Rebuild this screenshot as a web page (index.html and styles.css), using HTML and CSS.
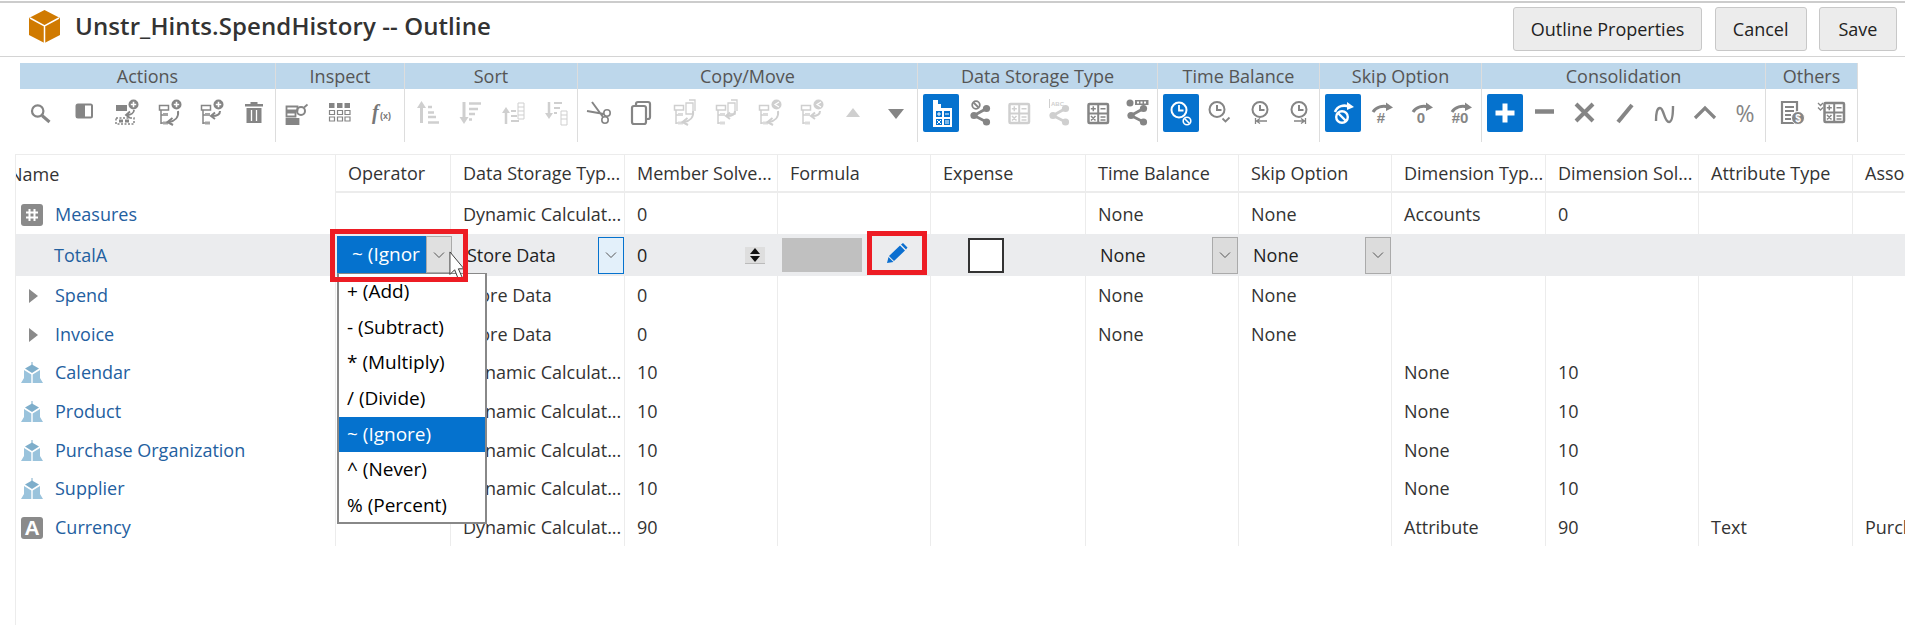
FILE: index.html
```html
<!DOCTYPE html>
<html>
<head>
    <title>Unstr_Hints.SpendHistory -- Outline</title>
    <link rel="stylesheet" href="styles.css">
</head>
<body>
    <!-- shared icon parts -->
    <svg class="sprite" aria-hidden="true">
        <symbol id="tree" viewBox="0 0 32 32">
            <path d="M6.5 8.500h9v4.500h-9zM8 13v14M8 18h2M8 26h2" fill="none" stroke="currentColor" stroke-width="1.500"/>
            <path d="M10 16h5v3h-5zM10 24.500h5v3h-5z" fill="currentColor" opacity=".75"/>
        </symbol>
        <symbol id="plus-dot" viewBox="0 0 32 32">
            <circle cx="23.500" cy="7.500" r="5" fill="currentColor"/>
            <path d="M20.800 7.500h5.400M23.500 4.800v5.400" stroke="#fff" stroke-width="1.600"/>
        </symbol>
        <symbol id="share-dot" viewBox="0 0 32 32">
            <circle cx="23.500" cy="7.500" r="5" fill="currentColor"/>
            <path d="M26 5l-4 2.500 4 2.500" fill="none" stroke="#fff" stroke-width="1.200"/>
        </symbol>
        <symbol id="copy-dot" viewBox="0 0 32 32">
            <path d="M18 6h7v11h-7zM21 3h6v11" fill="none" stroke="currentColor" stroke-width="1.300"/>
        </symbol>
        <symbol id="arrow-long" viewBox="0 0 32 32">
            <path d="M25 14c1 6-3 10-9 11" fill="none" stroke="currentColor" stroke-width="2"/>
            <path d="M19.500 21l-5 4 5.500 3" fill="none" stroke="currentColor" stroke-width="2"/>
        </symbol>
        <symbol id="arrow-short" viewBox="0 0 32 32">
            <path d="M25 14c0 3-3 5-8 5" fill="none" stroke="currentColor" stroke-width="2"/>
            <path d="M20 15.500l-4 3.500 4 3" fill="none" stroke="currentColor" stroke-width="2"/>
        </symbol>
        <symbol id="share" viewBox="0 0 32 32">
            <path d="M22.500 11.500L10 18.500l12.500 6.500" fill="none" stroke="currentColor" stroke-width="2.800"/>
            <circle cx="22.500" cy="11.500" r="3.600" fill="currentColor"/>
            <circle cx="10" cy="18.500" r="3.600" fill="currentColor"/>
            <circle cx="22.500" cy="25" r="3.600" fill="currentColor"/>
        </symbol>
        <symbol id="calc" viewBox="0 0 32 32">
            <rect x="6.500" y="7" width="19.500" height="19" rx="1" fill="none" stroke="currentColor" stroke-width="2.500"/>
            <path d="M16.200 7v19M6.500 16.500h19.500" stroke="currentColor" stroke-width="2"/>
            <path d="M8.800 11.800h5M11.300 9.300v5M18.500 11.800h5M9 19l4.500 4.500M13.500 19L9 23.500M18.500 20h5M18.500 23h5" stroke="currentColor" stroke-width="1.500"/>
        </symbol>
        <symbol id="clock" viewBox="0 0 32 32">
            <circle cx="16" cy="12.500" r="7.500" fill="none" stroke="currentColor" stroke-width="2"/>
            <path d="M16 8v5h4.500" fill="none" stroke="currentColor" stroke-width="2"/>
        </symbol>
        <symbol id="skip-arc" viewBox="0 0 32 32">
            <path d="M7 15c3-5 10-7 15-5" fill="none" stroke="currentColor" stroke-width="3"/>
            <path d="M20 5.500l7 5-7 3.500z" fill="currentColor"/>
        </symbol>
        <symbol id="dimension" viewBox="0 0 22 22">
            <path d="M10.500 0h1v4h-1z" fill="#7eaecb"/>
            <path d="M11 2.500l7 4-7 4.500-7-4.500z" fill="#7eaecb"/>
            <path d="M3 8l7.300 4.500V21H0l3-5z" fill="#9ac3dc"/>
            <path d="M19 8l-7.300 4.500V21H22l-3-5z" fill="#9ac3dc"/>
        </symbol>
        <symbol id="chevron" viewBox="0 0 12 8">
            <path d="M1 1.500l5 5 5-5" fill="none" stroke="#555" stroke-width="1"/>
        </symbol>
    </svg>

    <header class="titlebar">
        <svg class="cube" viewBox="0 0 31 33">
            <path d="M15.500 0L31 8v17l-15.500 8L0 25V8z" fill="#d07a00"/>
            <path d="M1 8l14.500 8L30 8M15.500 16v17" fill="none" stroke="#fff" stroke-width="1.500"/>
        </svg>
        <h1 class="title">Unstr_Hints.SpendHistory -- Outline</h1>
        <div class="actions">
            <button class="btn">Outline Properties</button>
            <button class="btn">Cancel</button>
            <button class="btn">Save</button>
        </div>
    </header>

    <section class="toolbar">
        <div class="group g-actions">
            <div class="group-title">Actions</div>
            <div class="icons">
                <span class="ico"><svg viewBox="0 0 32 32"><circle cx="12.700" cy="14" r="5.700" fill="none" stroke="currentColor" stroke-width="2.200"/><path d="M17 18.500l7.500 6.500" stroke="currentColor" stroke-width="3"/></svg></span>
                <span class="ico"><svg viewBox="0 0 32 32"><rect x="7.500" y="6.500" width="17.500" height="15" rx="2.500" fill="currentColor"/><rect x="17" y="8.500" width="6" height="11" fill="#fff"/></svg></span>
                <span class="ico"><svg viewBox="0 0 32 32"><path d="M6 8h11v6H6zM8 14v6" fill="currentColor"/><path d="M24 13c0 3-3 5-7 5M20 14.500L16 18l4 3" fill="none" stroke="currentColor" stroke-width="1.800"/><path d="M6 21h18v6H6z" fill="none" stroke="currentColor" stroke-width="1.500" stroke-dasharray="2 1.500"/><path d="M9 22.500h4v3H9zM15 22.500h4v3h-4z" fill="currentColor"/><use href="#plus-dot"/></svg></span>
                <span class="ico"><svg viewBox="0 0 32 32"><use href="#tree"/><use href="#arrow-long"/><use href="#plus-dot"/></svg></span>
                <span class="ico"><svg viewBox="0 0 32 32"><use href="#tree"/><use href="#arrow-short"/><use href="#plus-dot"/></svg></span>
                <span class="ico"><svg viewBox="0 0 32 32"><path d="M7 7h18v2.500H7zM12.500 7V5h7v2z" fill="currentColor"/><path d="M8.500 11h15v15h-15z" fill="currentColor"/><path d="M13.500 13v11M18.500 13v11" stroke="#fff" stroke-width="1.300"/></svg></span>
            </div>
        </div>
        <div class="group g-inspect">
            <div class="group-title">Inspect</div>
            <div class="icons">
                <span class="ico"><svg viewBox="0 0 32 32"><path d="M5.500 9.500h11v4h-11zM5.500 15.500h9v4h-9zM5.500 22h12v5h-12z" fill="none" stroke="currentColor" stroke-width="1.800"/><path d="M6 22h11v5H6z" fill="currentColor"/><circle cx="20" cy="14" r="4" fill="none" stroke="currentColor" stroke-width="2"/><path d="M23 10.500l3.500-3" stroke="currentColor" stroke-width="1.800"/></svg></span>
                <span class="ico"><svg viewBox="0 0 32 32"><path d="M5 6h5.500v5H5zM13 6h5.500v5H13zM20.500 6H26v5h-5.500z" fill="currentColor"/><path d="M5.500 13.500h5v4h-5zM13.500 13.500h5v4h-5zM21 13.500h5v4h-5zM5.500 20h5v4h-5zM13.500 20h5v4h-5zM21 20h5v4h-5z" fill="none" stroke="currentColor" stroke-width="1.200"/></svg></span>
                <span class="ico"><svg viewBox="0 0 32 32"><text x="5" y="22" class="fx-f">f</text><text x="13" y="22" class="fx-x">(x)</text></svg></span>
            </div>
        </div>
        <div class="group g-sort">
            <div class="group-title">Sort</div>
            <div class="icons off">
                <span class="ico"><svg viewBox="0 0 32 32"><path d="M10.500 9v17" stroke="currentColor" stroke-width="3"/><path d="M6 11l4.500-7 4.500 7z" fill="currentColor"/><path d="M17 10h4M17 15.500h6M17 20h8M17 25.500h11" stroke="currentColor" stroke-width="2.500"/></svg></span>
                <span class="ico"><svg viewBox="0 0 32 32"><path d="M10 5v17" stroke="currentColor" stroke-width="3"/><path d="M5.500 20l4.500 7 4.500-7z" fill="currentColor"/><path d="M15 6.500h12M15 12h9M15 17h6M15 22.500h3" stroke="currentColor" stroke-width="2.500"/></svg></span>
                <span class="ico"><svg viewBox="0 0 32 32"><path d="M9 14v13" stroke="currentColor" stroke-width="2.500"/><path d="M5 16l4-6 4 6z" fill="currentColor"/><path d="M14 14h5M14 19h6M14 24h8" stroke="currentColor" stroke-width="2"/><path d="M21 6h6v16h-6zM21 10h6M21 14h6M21 18h6" fill="none" stroke="currentColor" stroke-width="1"/></svg></span>
                <span class="ico"><svg viewBox="0 0 32 32"><path d="M9 5v13" stroke="currentColor" stroke-width="2.500"/><path d="M5 16l4 6 4-6z" fill="currentColor"/><path d="M14 6h8M14 11h6M14 16h3" stroke="currentColor" stroke-width="2"/><path d="M21 14h6v14h-6zM21 18h6M21 22h6" fill="none" stroke="currentColor" stroke-width="1"/></svg></span>
            </div>
        </div>
        <div class="group g-copy">
            <div class="group-title">Copy/Move</div>
            <div class="icons">
                <span class="ico"><svg viewBox="0 0 32 32"><path d="M4 14l17 3M9 5l11 15" fill="none" stroke="currentColor" stroke-width="2"/><circle cx="24" cy="16" r="3.200" fill="none" stroke="currentColor" stroke-width="1.600"/><circle cx="22" cy="23" r="3.200" fill="none" stroke="currentColor" stroke-width="1.600"/></svg></span>
                <span class="ico"><svg viewBox="0 0 32 32"><rect x="10" y="5" width="14" height="17" rx="2" fill="none" stroke="currentColor" stroke-width="2.200"/><rect x="6" y="9" width="14" height="18" rx="2" fill="#fff" stroke="currentColor" stroke-width="2.200"/></svg></span>
                <span class="ico off"><svg viewBox="0 0 32 32"><use href="#tree"/><use href="#arrow-long"/><use href="#copy-dot"/></svg></span>
                <span class="ico off"><svg viewBox="0 0 32 32"><use href="#tree"/><use href="#arrow-short"/><use href="#copy-dot"/></svg></span>
                <span class="ico off"><svg viewBox="0 0 32 32"><use href="#tree"/><use href="#arrow-long"/><use href="#share-dot"/></svg></span>
                <span class="ico off"><svg viewBox="0 0 32 32"><use href="#tree"/><use href="#arrow-short"/><use href="#share-dot"/></svg></span>
                <span class="ico off"><svg viewBox="0 0 32 32"><path d="M16 11l7 9H9z" fill="currentColor"/></svg></span>
                <span class="ico"><svg viewBox="0 0 32 32"><path d="M8 12h16l-8 10z" fill="currentColor"/></svg></span>
            </div>
        </div>
        <div class="group g-storage">
            <div class="group-title">Data Storage Type</div>
            <div class="icons">
                <span class="ico on"><svg viewBox="0 0 32 32"><path d="M8 3h5v4h3v4h11v19H8z" fill="#fff"/><path d="M11 14h6v6h-6zM19 14h6v6h-6zM11 22h6v6h-6zM19 22h6v6h-6z" fill="#0572ce"/><path d="M14 15v4M12 17h4M20 17h4M12 23l4 4M16 23l-4 4M20 24h4M20 26h4" stroke="#fff" stroke-width="1"/></svg></span>
                <span class="ico"><svg viewBox="0 0 32 32"><use href="#share"/><circle cx="12" cy="8" r="3.800" fill="#fff" stroke="currentColor" stroke-width="1.800"/><path d="M9.500 5.500l5 5" stroke="currentColor" stroke-width="1.800"/></svg></span>
                <span class="ico off"><svg viewBox="0 0 32 32"><use href="#calc"/></svg></span>
                <span class="ico off"><svg viewBox="0 0 32 32"><use href="#share"/><path d="M6.500 2v9" stroke="currentColor" stroke-width="1"/><text x="8" y="9" class="abc">ABC</text></svg></span>
                <span class="ico"><svg viewBox="0 0 32 32"><use href="#calc"/></svg></span>
                <span class="ico"><svg viewBox="0 0 32 32"><use href="#share"/><circle cx="9" cy="6" r="3.500" fill="currentColor"/><rect x="14" y="3" width="13.500" height="5" fill="currentColor"/><path d="M16 5.500h10" stroke="#fff" stroke-width="2" stroke-dasharray="2 1.500"/></svg></span>
            </div>
        </div>
        <div class="group g-time">
            <div class="group-title">Time Balance</div>
            <div class="icons">
                <span class="ico on"><svg viewBox="0 0 32 32"><circle cx="14" cy="13" r="7.500" fill="none" stroke="#fff" stroke-width="2"/><path d="M14 8v5.500h4.500" fill="none" stroke="#fff" stroke-width="1.800"/><circle cx="22" cy="24" r="3.800" fill="#0572ce" stroke="#fff" stroke-width="1.600"/><path d="M19.500 21.500l5 5" stroke="#fff" stroke-width="1.600"/></svg></span>
                <span class="ico"><svg viewBox="0 0 32 32"><use href="#clock" x="-3"/><path d="M18.500 21.500l3 3 4-4" fill="none" stroke="currentColor" stroke-width="1.800"/></svg></span>
                <span class="ico"><svg viewBox="0 0 32 32"><use href="#clock"/><path d="M11.500 21v6M12 24h11M16 21.500L12.500 24l3.500 2.500" fill="none" stroke="currentColor" stroke-width="1.300"/></svg></span>
                <span class="ico"><svg viewBox="0 0 32 32"><use href="#clock"/><path d="M22.500 21v6M11 24h11M18 21.500l3.500 2.500-3.500 2.500" fill="none" stroke="currentColor" stroke-width="1.300"/></svg></span>
            </div>
        </div>
        <div class="group g-skip">
            <div class="group-title">Skip Option</div>
            <div class="icons">
                <span class="ico on"><svg viewBox="0 0 32 32"><path d="M8 15c2-6 9-8 15-5" fill="none" stroke="#fff" stroke-width="2.600"/><path d="M20 5l7 5-7 3z" fill="#fff"/><circle cx="15" cy="20" r="5.800" fill="none" stroke="#fff" stroke-width="2.400"/><path d="M11 16l8 8" stroke="#fff" stroke-width="2.400"/></svg></span>
                <span class="ico"><svg viewBox="0 0 32 32"><use href="#skip-arc"/><text x="15" y="26" class="skip">#</text></svg></span>
                <span class="ico"><svg viewBox="0 0 32 32"><use href="#skip-arc"/><text x="15" y="26" class="skip">0</text></svg></span>
                <span class="ico"><svg viewBox="0 0 32 32"><use href="#skip-arc"/><text x="15" y="26" class="skip">#0</text></svg></span>
            </div>
        </div>
        <div class="group g-cons">
            <div class="group-title">Consolidation</div>
            <div class="icons">
                <span class="ico on"><svg viewBox="0 0 32 32"><path d="M6.500 16h19M16 6.500v19" stroke="#fff" stroke-width="5"/></svg></span>
                <span class="ico"><svg viewBox="0 0 32 32"><path d="M6 14.500h19" stroke="currentColor" stroke-width="4.500"/></svg></span>
                <span class="ico"><svg viewBox="0 0 32 32"><path d="M7 7l17 17M24 7L7 24" stroke="currentColor" stroke-width="4"/></svg></span>
                <span class="ico"><svg viewBox="0 0 32 32"><path d="M9 25L23 8" stroke="currentColor" stroke-width="4"/></svg></span>
                <span class="ico"><svg viewBox="0 0 32 32"><path d="M7 24c0-8 1-13 4-13 4 0 4 14 9 14 3 0 4-6 4-16" fill="none" stroke="currentColor" stroke-width="2.400"/></svg></span>
                <span class="ico"><svg viewBox="0 0 32 32"><path d="M6 21l10-10 10 10" fill="none" stroke="currentColor" stroke-width="3.200"/></svg></span>
                <span class="ico"><svg viewBox="0 0 32 32"><text x="16" y="25" class="pct">%</text></svg></span>
            </div>
        </div>
        <div class="group g-others">
            <div class="group-title">Others</div>
            <div class="icons">
                <span class="ico"><svg viewBox="0 0 32 32"><path d="M6 5h15v21H6z" fill="none" stroke="currentColor" stroke-width="2.200"/><path d="M9 10h9M9 14h9M9 18h6M9 22h6" stroke="currentColor" stroke-width="1.800"/><circle cx="22" cy="21" r="6.500" fill="currentColor" stroke="#fff" stroke-width="1"/><text x="22" y="25" class="dollar">$</text></svg></span>
                <span class="ico"><svg viewBox="0 0 32 32"><g transform="translate(3 -1)"><use href="#calc"/></g><path d="M3 6l2.500 2.500L8 6M3 10.500L5.500 13 8 10.500" fill="none" stroke="currentColor" stroke-width="1.300"/></svg></span>
            </div>
        </div>
    </section>

    <div class="grid-wrap">
        <table class="grid">
            <colgroup>
                <col class="c-name"><col class="c-op"><col class="c-ds"><col class="c-n"><col class="c-n"><col class="c-exp">
                <col class="c-n"><col class="c-n"><col class="c-dim"><col class="c-n"><col class="c-dim"><col class="c-last">
            </colgroup>
            <tr class="head">
                <th class="th-name"><span class="clip-name">Name</span></th>
                <th>Operator</th><th>Data Storage Typ...</th><th>Member Solve...</th><th>Formula</th><th>Expense</th>
                <th>Time Balance</th><th>Skip Option</th><th>Dimension Typ...</th><th>Dimension Sol...</th><th>Attribute Type</th><th>Associated Attributes</th>
            </tr>
            <tr class="first">
                <td class="name"><svg class="type" viewBox="0 0 22 22"><rect width="22" height="22" rx="3" fill="#8a8a8a"/><path d="M8.500 5v12M13.500 5v12M5 8.500h12M5 13.500h12" stroke="#fff" stroke-width="2"/></svg>Measures</td>
                <td></td><td>Dynamic Calculat...</td><td>0</td><td></td><td></td><td>None</td><td>None</td><td>Accounts</td><td>0</td><td></td><td></td>
            </tr>
            <tr class="editing">
                <td class="name"><span class="no-icon"></span>TotalA</td>
                <td></td>
                <td class="store"><div class="edit"><span>Store Data</span><span class="drop focus"><svg viewBox="0 0 12 8"><use href="#chevron"/></svg></span></div></td>
                <td class="num"><div class="edit"><span>0</span><span class="spin"><i class="up"></i><i class="down"></i></span></div></td>
                <td class="formula"><div class="formula-box"></div></td>
                <td class="expense"><div class="check"></div></td>
                <td class="pick"><div class="edit"><span>None</span><span class="drop"><svg viewBox="0 0 12 8"><use href="#chevron"/></svg></span></div></td>
                <td class="pick"><div class="edit"><span>None</span><span class="drop"><svg viewBox="0 0 12 8"><use href="#chevron"/></svg></span></div></td>
                <td></td><td></td><td></td><td></td>
            </tr>
            <tr>
                <td class="name"><i class="twist"></i>Spend</td>
                <td></td><td>Store Data</td><td>0</td><td></td><td></td><td>None</td><td>None</td><td></td><td></td><td></td><td></td>
            </tr>
            <tr>
                <td class="name"><i class="twist"></i>Invoice</td>
                <td></td><td>Store Data</td><td>0</td><td></td><td></td><td>None</td><td>None</td><td></td><td></td><td></td><td></td>
            </tr>
            <tr>
                <td class="name"><svg class="type"><use href="#dimension"/></svg>Calendar</td>
                <td></td><td>Dynamic Calculat...</td><td>10</td><td></td><td></td><td></td><td></td><td>None</td><td>10</td><td></td><td></td>
            </tr>
            <tr>
                <td class="name"><svg class="type"><use href="#dimension"/></svg>Product</td>
                <td></td><td>Dynamic Calculat...</td><td>10</td><td></td><td></td><td></td><td></td><td>None</td><td>10</td><td></td><td></td>
            </tr>
            <tr>
                <td class="name"><svg class="type"><use href="#dimension"/></svg>Purchase Organization</td>
                <td></td><td>Dynamic Calculat...</td><td>10</td><td></td><td></td><td></td><td></td><td>None</td><td>10</td><td></td><td></td>
            </tr>
            <tr>
                <td class="name"><svg class="type"><use href="#dimension"/></svg>Supplier</td>
                <td></td><td>Dynamic Calculat...</td><td>10</td><td></td><td></td><td></td><td></td><td>None</td><td>10</td><td></td><td></td>
            </tr>
            <tr>
                <td class="name"><svg class="type" viewBox="0 0 22 22"><rect width="22" height="22" rx="3" fill="#8a8a8a"/><text x="11" y="18" class="type-a">A</text></svg>Currency</td>
                <td></td><td>Dynamic Calculat...</td><td>90</td><td></td><td></td><td></td><td></td><td>Attribute</td><td>90</td><td>Text</td><td>Purchase Organization</td>
            </tr>
        </table>

        <!-- operator editor, open list and the callouts lie over the grid -->
        <div class="op-select">
            <span class="op-value">~ (Ignor</span>
            <span class="op-drop"><svg viewBox="0 0 12 8"><use href="#chevron"/></svg></span>
        </div>
        <ul class="op-list">
            <li>+ (Add)</li>
            <li>- (Subtract)</li>
            <li>* (Multiply)</li>
            <li>/ (Divide)</li>
            <li class="selected">~ (Ignore)</li>
            <li>^ (Never)</li>
            <li>% (Percent)</li>
        </ul>
        <svg class="cursor" viewBox="0 0 16 32">
            <path d="M1 1v24l5-5 4 10 4-2-4-9h6z" fill="#fff" stroke="#333" stroke-width="1"/>
        </svg>
        <div class="callout callout-op"></div>
        <div class="callout callout-pen">
            <svg class="pencil" viewBox="0 0 22 20">
                <path d="M3 13L14 2.500l5 5L8 18zM1 20l1.500-6 5 5zM15 1.500L17 0l4.500 4.500L20 6.500z" fill="#0b6fd0"/>
            </svg>
        </div>
    </div>
</body>
</html>
```

FILE: styles.css
```css
html, body {
    margin: 0;
    padding: 0;
    height: 625px;
    overflow: hidden;
    background: #fff;
}

body {
    font-family: "Open Sans", Arial, sans-serif;
    font-size: 18px;
    color: #333;
}

.sprite {
    display: none;
}

/* title bar */
.titlebar {
    display: flex;
    align-items: center;
    height: 53px;
    margin-top: 1px;
    padding: 0 8px 0 29px;
    border-top: 2px solid #ccc;
    border-bottom: 1px solid #d4d4d4;
}

.cube {
    width: 31px;
    height: 33px;
    margin: 0 15px 7px 0;
}

.title {
    margin: 0 0 8px;
    font-size: 24px;
    font-weight: 600;
    letter-spacing: 0.1px;
    color: #333;
}

.actions {
    display: flex;
    gap: 12.5px;
    margin: 0 0 1px auto;
}

.btn {
    min-width: 78px;
    height: 44px;
    padding: 0 17px;
    font-family: inherit;
    font-size: 18px;
    color: #222;
    background: #ececec;
    border: 1px solid #c8c8c8;
    border-radius: 3px;
}

/* toolbar */
.toolbar {
    display: flex;
    margin: 6px 0 0 20px;
}

.group {
    box-sizing: border-box;
    border-right: 1px solid #ddd;
}

.g-actions { width: 256px; }
.g-inspect { width: 129px; }
.g-sort { width: 173px; }
.g-copy { width: 340px; }
.g-storage { width: 240px; }
.g-time { width: 162px; }
.g-skip { width: 162px; }
.g-cons { width: 284px; }
.g-others { width: 92px; }

.group-title {
    height: 26px;
    line-height: 26px;
    text-align: center;
    font-size: 18px;
    color: #555;
    background: #bdd7eb;
}

.icons {
    display: flex;
    justify-content: space-around;
    height: 48px;
    padding-top: 5px;
    color: #858585;
}

.g-storage .icons, .g-time .icons, .g-skip .icons, .g-cons .icons {
    padding-left: 3px;
}

.g-others .icons {
    padding: 5px 6px 0;
}

.icons.off, .ico.off {
    color: #cfcfcf;
}

.ico {
    display: flex;
    align-items: center;
    justify-content: center;
    width: 36px;
    height: 38px;
    border-radius: 2px;
}

.ico svg {
    width: 32px;
    height: 32px;
}

.ico.on {
    background: #0572ce;
}

.fx-f {
    font-family: "Liberation Serif", serif;
    font-style: italic;
    font-weight: bold;
    font-size: 20px;
    fill: #777;
}

.fx-x {
    font-family: "Liberation Sans", sans-serif;
    font-weight: bold;
    font-size: 9px;
    fill: #777;
}

.abc {
    font-family: "Liberation Sans", sans-serif;
    font-weight: bold;
    font-size: 6px;
    fill: #cfcfcf;
}

.skip {
    font-family: "Liberation Sans", sans-serif;
    font-weight: bold;
    font-size: 15px;
    text-anchor: middle;
    fill: #858585;
}

.pct {
    font-family: "Open Sans", sans-serif;
    font-size: 23px;
    text-anchor: middle;
    fill: #858585;
}

.dollar {
    font-family: "Liberation Sans", sans-serif;
    font-weight: bold;
    font-size: 10px;
    text-anchor: middle;
    fill: #fff;
}

/* grid */
.grid-wrap {
    position: relative;
    height: 471px;
    margin: 12px 0 0 15px;
    border-top: 1px solid #ececec;
    border-left: 1px solid #ececec;
}

.grid {
    table-layout: fixed;
    width: 2036px;
    border-collapse: separate;
    border-spacing: 0;
}

.c-name { width: 319px; }
.c-op { width: 115px; }
.c-ds { width: 174px; }
.c-n { width: 153px; }
.c-exp { width: 155px; }
.c-dim { width: 154px; }
.c-last { width: 200px; }

th, td {
    box-sizing: border-box;
    padding: 0 0 0 12px;
    border-left: 1px solid #ececec;
    font-weight: normal;
    text-align: left;
    white-space: nowrap;
    overflow: hidden;
}

th {
    height: 38px;
    border-bottom: 2px solid #ececec;
}

td {
    height: 38.6px;
}

th.th-name, td.name {
    padding-left: 0;
    border-left: none;
}

th.th-name {
    border-bottom: none;
}

.clip-name {
    display: block;
    margin-left: -7px;
}

td.name {
    color: #23609f;
}

.first td {
    height: 41px;
}

.editing td {
    height: 42px;
    background: #ebecee;
    border-left-color: #ebecee;
    color: #222;
}

.editing td.name {
    color: #23609f;
}

.type {
    width: 22px;
    height: 22px;
    margin: 0 12px 0 5px;
    vertical-align: -5px;
}

.type-a {
    font-family: "Liberation Sans", sans-serif;
    font-weight: bold;
    font-size: 21px;
    text-anchor: middle;
    fill: #fff;
}

.no-icon {
    display: inline-block;
    width: 38px;
}

.twist {
    display: inline-block;
    width: 0;
    height: 0;
    margin: 0 17px 0 13px;
    border-left: 9px solid #8a8a8a;
    border-top: 7px solid transparent;
    border-bottom: 7px solid transparent;
    vertical-align: -1px;
}

.edit {
    display: flex;
    align-items: center;
    justify-content: space-between;
    height: 37px;
}

.drop {
    display: flex;
    align-items: center;
    justify-content: center;
    box-sizing: border-box;
    width: 26px;
    height: 37px;
    background: #dcdcdc;
    border: 1px solid #aaa;
}

.drop svg, .op-drop svg {
    width: 12px;
    height: 8px;
}

.drop.focus {
    background: #e3f0fa;
    border-color: #0572ce;
}

td.store {
    padding-left: 16px;
}

td.pick {
    padding-left: 14px;
}

.num .edit {
    padding-right: 12px;
}

.spin {
    display: flex;
    flex-direction: column;
    justify-content: space-between;
    align-items: center;
    box-sizing: border-box;
    width: 20px;
    height: 17px;
    padding: 1px 0;
    background: #dedede;
    border-bottom: 1px solid #bbb;
}

.spin i {
    width: 0;
    height: 0;
    border-left: 5px solid transparent;
    border-right: 5px solid transparent;
}

.spin .up {
    border-bottom: 6px solid #111;
}

.spin .down {
    border-top: 6px solid #111;
}

td.formula {
    padding-left: 4px;
}

.formula-box {
    width: 80px;
    height: 34px;
    background: #c0c0c0;
}

td.expense {
    padding-left: 37px;
}

.check {
    box-sizing: border-box;
    width: 36px;
    height: 35px;
    background: #fff;
    border: 2px solid #333;
}

/* things lying over the grid, offsets are from the grid corner at 16,154 */
.op-select {
    position: absolute;
    top: 81px;
    left: 321px;
    display: flex;
    height: 37px;
}

.op-value {
    box-sizing: border-box;
    width: 89px;
    padding-left: 15px;
    font-size: 19px;
    line-height: 37px;
    white-space: nowrap;
    overflow: hidden;
    color: #fff;
    background: #0572ce;
}

.op-drop {
    display: flex;
    align-items: center;
    justify-content: center;
    box-sizing: border-box;
    width: 26px;
    background: #e0e0e0;
    border: 1px solid #aaa;
}

.op-list {
    position: absolute;
    top: 118px;
    left: 321px;
    box-sizing: border-box;
    width: 150px;
    height: 251px;
    margin: 0;
    padding: 0;
    list-style: none;
    font-size: 19px;
    color: #000;
    background: #fff;
    border: 2px solid #888;
    border-top-width: 1px;
}

.op-list li {
    height: 35.7px;
    padding-left: 8px;
    line-height: 35px;
}

.op-list .selected {
    color: #fff;
    background: #0572ce;
}

.cursor {
    position: absolute;
    top: 96px;
    left: 433px;
    width: 15px;
    height: 30px;
}

.callout {
    position: absolute;
    box-sizing: border-box;
    border: 5px solid #ed1c24;
}

.callout-op {
    top: 74px;
    left: 314px;
    width: 138px;
    height: 53px;
}

.callout-pen {
    display: flex;
    align-items: center;
    justify-content: center;
    top: 76px;
    left: 851px;
    width: 60px;
    height: 44px;
}

.pencil {
    width: 22px;
    height: 20px;
}
```
